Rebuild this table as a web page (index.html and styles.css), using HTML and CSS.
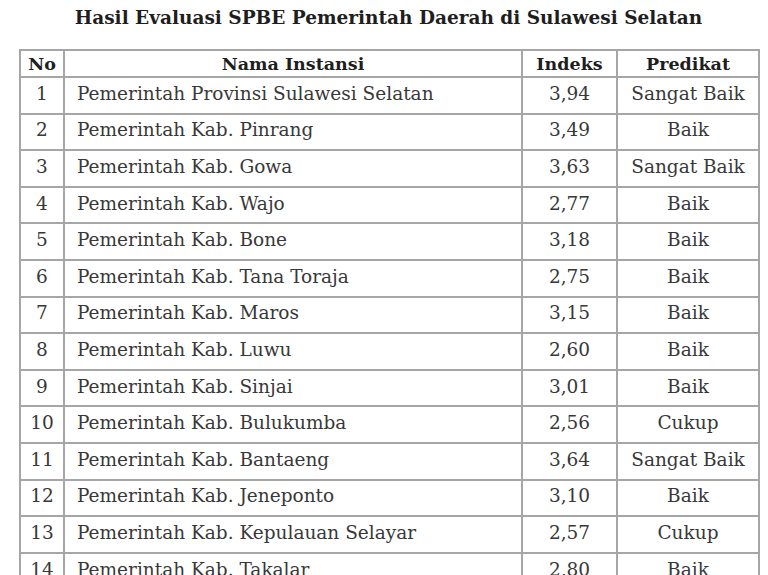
FILE: index.html
```html
<!DOCTYPE html>
<html>
<head>
<meta charset="utf-8">
<link rel="stylesheet" href="styles.css">
</head>
<body>
<div class="page">
  <h1 class="title">Hasil Evaluasi SPBE Pemerintah Daerah di Sulawesi Selatan</h1>
  <table class="grid">
    <colgroup>
      <col class="c-no"><col class="c-name"><col class="c-idx"><col class="c-pred">
    </colgroup>
    <thead>
      <tr><th>No</th><th>Nama Instansi</th><th>Indeks</th><th>Predikat</th></tr>
    </thead>
    <tbody>
      <tr><td class="num">1</td><td class="name">Pemerintah Provinsi Sulawesi Selatan</td><td class="mid">3,94</td><td class="mid">Sangat Baik</td></tr>
      <tr><td class="num">2</td><td class="name">Pemerintah Kab. Pinrang</td><td class="mid">3,49</td><td class="mid">Baik</td></tr>
      <tr><td class="num">3</td><td class="name">Pemerintah Kab. Gowa</td><td class="mid">3,63</td><td class="mid">Sangat Baik</td></tr>
      <tr><td class="num">4</td><td class="name">Pemerintah Kab. Wajo</td><td class="mid">2,77</td><td class="mid">Baik</td></tr>
      <tr><td class="num">5</td><td class="name">Pemerintah Kab. Bone</td><td class="mid">3,18</td><td class="mid">Baik</td></tr>
      <tr><td class="num">6</td><td class="name">Pemerintah Kab. Tana Toraja</td><td class="mid">2,75</td><td class="mid">Baik</td></tr>
      <tr><td class="num">7</td><td class="name">Pemerintah Kab. Maros</td><td class="mid">3,15</td><td class="mid">Baik</td></tr>
      <tr><td class="num">8</td><td class="name">Pemerintah Kab. Luwu</td><td class="mid">2,60</td><td class="mid">Baik</td></tr>
      <tr><td class="num">9</td><td class="name">Pemerintah Kab. Sinjai</td><td class="mid">3,01</td><td class="mid">Baik</td></tr>
      <tr><td class="num">10</td><td class="name">Pemerintah Kab. Bulukumba</td><td class="mid">2,56</td><td class="mid">Cukup</td></tr>
      <tr><td class="num">11</td><td class="name">Pemerintah Kab. Bantaeng</td><td class="mid">3,64</td><td class="mid">Sangat Baik</td></tr>
      <tr><td class="num">12</td><td class="name">Pemerintah Kab. Jeneponto</td><td class="mid">3,10</td><td class="mid">Baik</td></tr>
      <tr><td class="num">13</td><td class="name">Pemerintah Kab. Kepulauan Selayar</td><td class="mid">2,57</td><td class="mid">Cukup</td></tr>
      <tr><td class="num">14</td><td class="name">Pemerintah Kab. Takalar</td><td class="mid">2,80</td><td class="mid">Baik</td></tr>
    </tbody>
  </table>
</div>
</body>
</html>
```
FILE: styles.css
```css
html, body {
  margin: 0;
  padding: 0;
  background: #ffffff;
}
body {
  width: 768px;
  height: 575px;
  overflow: hidden;
  font-family: "DejaVu Serif", "Liberation Serif", serif;
  color: #383838;
}
.page {
  padding: 6px 0 0 19px;
}
.title {
  margin: 0 0 19px 0;
  width: 739px;
  text-align: center;
  font-size: 18.5px;
  font-weight: bold;
  color: #1e1e1e;
  line-height: 24px;
}
.grid {
  border-collapse: collapse;
  table-layout: fixed;
  width: 739px;
}
.c-no { width: 44px; }
.c-name { width: 458px; }
.c-idx { width: 95px; }
.c-pred { width: 142px; }
.grid th, .grid td {
  border: 2px solid #a6a6a6;
  padding: 0;
}
.grid th {
  height: 25px;
  font-size: 17.5px;
  font-weight: bold;
  color: #1e1e1e;
  text-align: center;
  vertical-align: middle;
  line-height: 20px;
}
.grid td {
  height: 31.6px;
  font-size: 18.5px;
  line-height: 22px;
  vertical-align: middle;
  padding-bottom: 3px;
}
.grid td.num {
  text-align: center;
}
.grid td.name {
  padding-left: 12px;
}
.grid td.mid {
  text-align: center;
}
```
